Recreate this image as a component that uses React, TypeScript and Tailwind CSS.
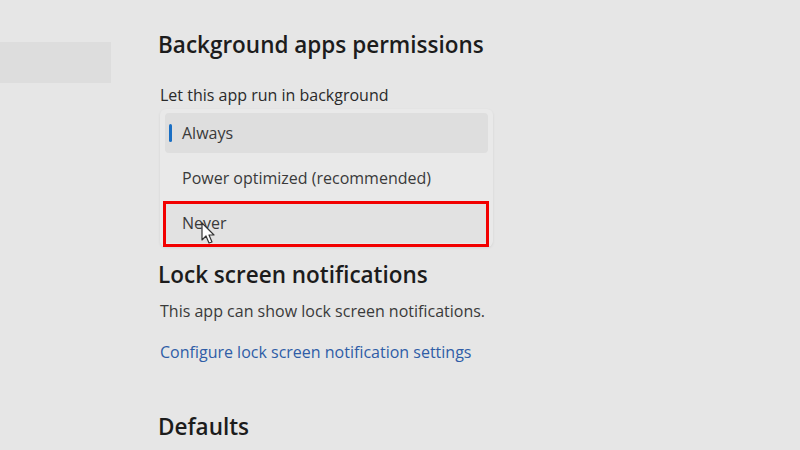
import React from 'react'

const font = { fontFamily: '"Open Sans", "Noto Sans", sans-serif' }

function Cursor() {
  return (
    <svg
      className="absolute left-[201px] top-[222px]"
      width="16"
      height="24"
      viewBox="0 0 16 24"
    >
      <path
        d="M1 1 L1 18 L5 14 L8 21 L11 20 L8 13 L13 13 Z"
        fill="#ffffff"
        stroke="#333333"
        strokeWidth="1.2"
        strokeLinejoin="round"
      />
    </svg>
  )
}

function MenuItem({ label, selected, boxed }: { label: string; selected?: boolean; boxed?: boolean }) {
  return (
    <div
      className={
        'relative flex h-[40px] items-center rounded-[4px] pl-[17px] text-[16px] text-[#3a3a3a] ' +
        (selected ? 'bg-[#dedede]' : '') +
        (boxed ? ' bg-[#e2e2e2]' : '')
      }
    >
      {selected && <span className="absolute left-[4px] top-[11px] h-[18px] w-[3px] rounded-full bg-[#1a6fc4]" />}
      {label}
      {boxed && (
        <span className="absolute -left-[2px] -right-[1px] -top-[2px] -bottom-[4px] border-[3px] border-[#f20000]" />
      )}
    </div>
  )
}

export default function App() {
  return (
    <div className="relative flex h-[450px] w-[800px] overflow-hidden bg-[#e6e6e6]" style={font}>
      <div className="w-[158px] shrink-0 pt-[42px]">
        <div className="h-[41px] w-[111px] bg-[#dddddd]" />
      </div>
      <div className="flex flex-col pt-[30px]">
        <h2 className="text-[22.5px] font-semibold leading-[30px] text-[#1c1c1c]">Background apps permissions</h2>
        <p className="mt-[24px] pl-[2px] text-[16px] leading-[22px] text-[#2a2a2a]">Let this app run in background</p>
        <div className="mt-[3px] ml-[2px] flex w-[333px] flex-col gap-[5px] rounded-[6px] bg-[#e9e9e9] px-[5px] py-[4px] shadow-[0_1px_3px_rgba(0,0,0,0.08)]">
          <MenuItem label="Always" selected />
          <MenuItem label="Power optimized (recommended)" />
          <MenuItem label="Never" boxed />
        </div>
        <h2 className="mt-[13px] text-[22.5px] font-semibold leading-[30px] text-[#1c1c1c]">Lock screen notifications</h2>
        <p className="mt-[10px] pl-[2px] text-[16px] leading-[22px] text-[#3a3a3a]">This app can show lock screen notifications.</p>
        <p className="mt-[19px] pl-[2px] text-[16px] leading-[22px] text-[#2f5da6]">Configure lock screen notification settings</p>
        <h2 className="mt-[49px] text-[22.5px] font-semibold leading-[30px] text-[#1c1c1c]">Defaults</h2>
      </div>
      <Cursor />
    </div>
  )
}
